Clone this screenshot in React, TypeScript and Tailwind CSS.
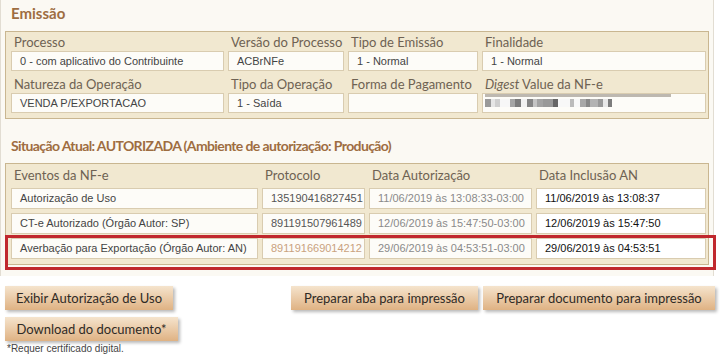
import React from "react";

const labelCls = "h-[18px] leading-[18px] pl-[3px] text-[13px] text-[#6e6253] whitespace-nowrap";
const inputCls =
  "h-[20px] leading-[18px] border border-[#d9ccb0] bg-[#fdfcf8] pl-[8px] text-[11px] whitespace-nowrap overflow-hidden";
const tInputCls =
  "h-[21px] leading-[19px] border border-[#d9ccb0] bg-[#fdfcf8] pl-[8px] text-[11px] whitespace-nowrap overflow-hidden";

function Btn({ children, w }: { children: React.ReactNode; w: string }) {
  return (
    <div
      className={`${w} h-[24px] leading-[24px] text-center text-[13px] text-[#2f2a25] bg-gradient-to-b from-[#f5e4cd] to-[#dfb283] shadow-[2px_2px_3px_rgba(0,0,0,0.28)] whitespace-nowrap`}
    >
      {children}
    </div>
  );
}

const blur = [
  { w: 6, c: "#9a9a9a" },
  { w: 4, c: "#e6e6e6" },
  { w: 5, c: "#cfcfcf" },
  { w: 10, c: "#f7f7f7" },
  { w: 5, c: "#a5a5a5" },
  { w: 6, c: "#7c7c7c" },
  { w: 6, c: "#f2f2f2" },
  { w: 6, c: "#858585" },
  { w: 4, c: "#c4c4c4" },
  { w: 6, c: "#a3a3a3" },
  { w: 10, c: "#999" },
  { w: 5, c: "#666" },
  { w: 12, c: "#f8f8f8" },
  { w: 4, c: "#bbb" },
  { w: 6, c: "#f8f8f8" },
  { w: 6, c: "#a8a8a8" },
  { w: 4, c: "#888" },
  { w: 8, c: "#b3b3b3" },
  { w: 5, c: "#999" },
  { w: 5, c: "#e8e8e8" },
  { w: 4, c: "#7c7c7c" },
];

export default function App() {
  const font = "font-['Lato',_'Open_Sans',_sans-serif]";
  const vfont = "font-['Liberation_Sans',_Arial,_sans-serif]";
  return (
    <div className={`w-[725px] h-[357px] bg-white relative ${font}`}>
      <div className="w-[714px] bg-[#fbf9f3] border-x border-[#e2ddd2] pb-[11px]">
        <div className="h-[31px] pl-[10px] pt-[3px] text-[15px] leading-[20px] font-bold text-[#9e6d41]">
          Emissão
        </div>
        <div className="mx-[4px] border border-[#c9b690] bg-[#f1e8d0] pl-[5px] pr-[3px] pt-[1px] pb-[5px]">
          <div className="grid grid-cols-[213px_116px_130px_224px] gap-x-[4px]">
            <div className={labelCls}>Processo</div>
            <div className={labelCls}>Versão do Processo</div>
            <div className={labelCls}>Tipo de Emissão</div>
            <div className={labelCls}>Finalidade</div>
            <div className={`${inputCls} ${vfont} text-[#444]`}>0 - com aplicativo do Contribuinte</div>
            <div className={`${inputCls} ${vfont} text-[#444]`}>ACBrNFe</div>
            <div className={`${inputCls} ${vfont} text-[#444]`}>1 - Normal</div>
            <div className={`${inputCls} ${vfont} text-[#444]`}>1 - Normal</div>
            <div className={`${labelCls} mt-[4px]`}>Natureza da Operação</div>
            <div className={`${labelCls} mt-[4px]`}>Tipo da Operação</div>
            <div className={`${labelCls} mt-[4px]`}>Forma de Pagamento</div>
            <div className={`${labelCls} mt-[4px]`}>
              <i>Digest</i> Value da NF-e
            </div>
            <div className={`${inputCls} ${vfont} text-[#444]`}>VENDA P/EXPORTACAO</div>
            <div className={`${inputCls} ${vfont} text-[#444]`}>1 - Saída</div>
            <div className={`${inputCls} ${vfont} text-[#444]`}></div>
            <div className={`${inputCls} relative`}>
              <div className="absolute left-[2px] top-[0px] w-[186px] h-[3px] bg-[#bdb8b0]" />
              <div className="absolute left-[2px] top-[5px] flex h-[8px]">
                {blur.map((b, i) => (
                  <div key={i} style={{ width: b.w, background: b.c }} />
                ))}
              </div>
            </div>
          </div>
        </div>
        <div className="h-[44px] pl-[10px] pt-[17px] text-[14px] leading-[20px] tracking-[-0.62px] font-bold text-[#9e6d41] whitespace-nowrap">
          Situação Atual: AUTORIZADA (Ambiente de autorização: Produção)
        </div>
        <div className="mx-[4px] border border-[#c9b690] bg-[#f1e8d0] pl-[5px] pr-[3px] pt-[1px] pb-[5px]">
          <div className="grid grid-cols-[247px_103px_163px_170px] gap-x-[4px] gap-y-[4px]">
            <div className={`${labelCls} h-[20px] leading-[20px] -mb-[1px]`}>Eventos da NF-e</div>
            <div className={`${labelCls} h-[20px] leading-[20px] -mb-[1px]`}>Protocolo</div>
            <div className={`${labelCls} h-[20px] leading-[20px] -mb-[1px]`}>Data Autorização</div>
            <div className={`${labelCls} h-[20px] leading-[20px] -mb-[1px]`}>Data Inclusão AN</div>

            <div className={`${tInputCls} ${vfont} text-[#444]`}>Autorização de Uso</div>
            <div className={`${tInputCls} ${vfont} text-[#555]`}>135190416827451</div>
            <div className={`${tInputCls} ${vfont} text-[#8a8a8a]`}>11/06/2019 às 13:08:33-03:00</div>
            <div className={`${tInputCls} ${vfont} text-[#111] bg-white`}>11/06/2019 às 13:08:37</div>

            <div className={`${tInputCls} ${vfont} text-[#444]`}>CT-e Autorizado (Órgão Autor: SP)</div>
            <div className={`${tInputCls} ${vfont} text-[#555]`}>891191507961489</div>
            <div className={`${tInputCls} ${vfont} text-[#8a8a8a]`}>12/06/2019 às 15:47:50-03:00</div>
            <div className={`${tInputCls} ${vfont} text-[#111] bg-white`}>12/06/2019 às 15:47:50</div>

            <div className={`${tInputCls} ${vfont} text-[#444]`}>Averbação para Exportação (Órgão Autor: AN)</div>
            <div className={`${tInputCls} ${vfont} text-[#c9a27e]`}>891191669014212</div>
            <div className={`${tInputCls} ${vfont} text-[#8a8a8a]`}>29/06/2019 às 04:53:51-03:00</div>
            <div className={`${tInputCls} ${vfont} text-[#111] bg-white`}>29/06/2019 às 04:53:51</div>
          </div>
        </div>
      </div>

      <div className="absolute left-[5px] top-[235px] w-[711px] h-[35px] border-[3px] border-[#c0282d]" />

      <div className="pl-[5px] pr-[10px] pt-[10px]">
        <div className="flex items-start">
          <Btn w="w-[168px]">Exibir Autorização de Uso</Btn>
          <div className="ml-auto flex gap-[5px]">
            <Btn w="w-[187px]">Preparar aba para impressão</Btn>
            <Btn w="w-[232px]">Preparar documento para impressão</Btn>
          </div>
        </div>
        <div className="mt-[7px]">
          <Btn w="w-[173px]">Download do documento*</Btn>
        </div>
        <div className={`${vfont} pl-[2px] pt-[1px] text-[10px] leading-[14px] text-[#444]`}>*Requer certificado digital.</div>
      </div>
    </div>
  );
}
